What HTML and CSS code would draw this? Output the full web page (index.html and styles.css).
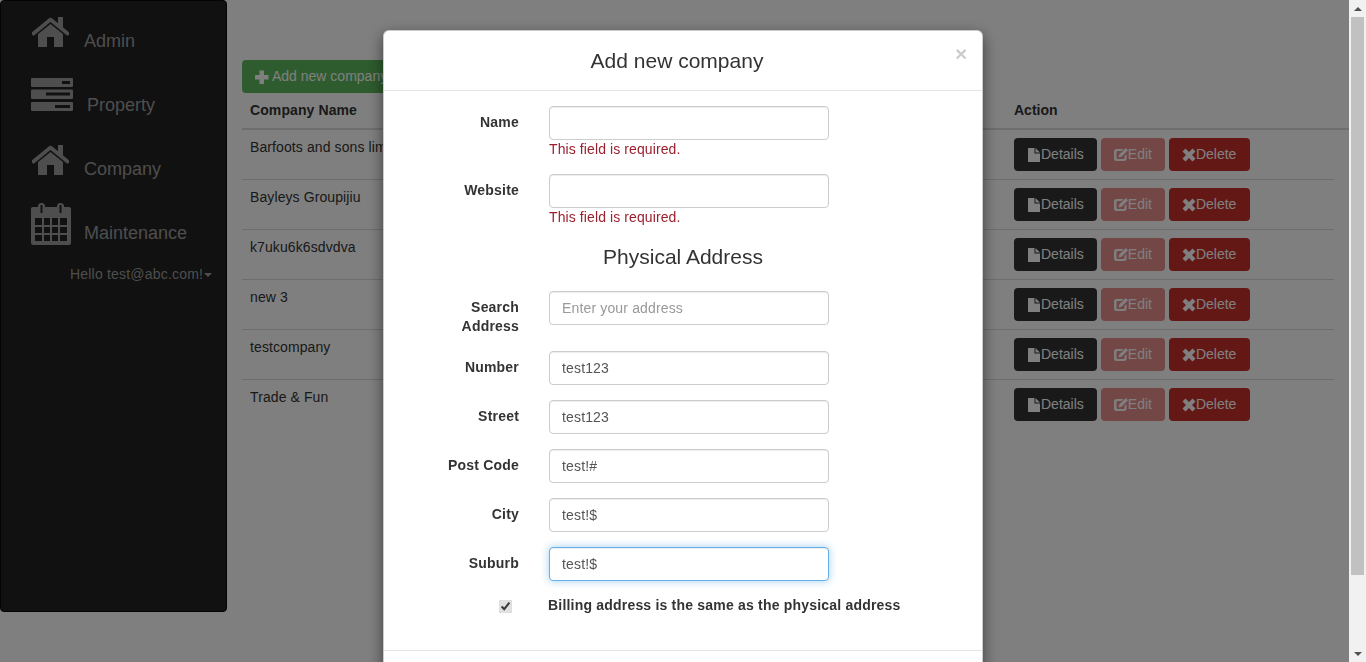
FILE: index.html
```html
<!DOCTYPE html>
<html lang="en">
<head>
<meta charset="utf-8">
<title>Add new company</title>
<link rel="stylesheet" href="styles.css">
</head>
<body>
<svg class="defs" width="0" height="0" aria-hidden="true">
  <symbol id="i-home" viewBox="0 0 37 30">
    <rect x="26" y="0" width="5" height="10"/>
    <path d="M1.5 16.5 18.5 2.5 35.5 16.5" fill="none" stroke="currentColor" stroke-width="3.6" stroke-linecap="round" stroke-linejoin="round"/>
    <path d="M18.5 7 31 17V30H22V20H15V30H6V17Z"/>
  </symbol>
  <symbol id="i-tasks" viewBox="0 0 42 33">
    <path fill-rule="evenodd" d="M1 0H41a1 1 0 0 1 1 1V8a1 1 0 0 1-1 1H1a1 1 0 0 1-1-1V1a1 1 0 0 1 1-1ZM31 3V6H39V3ZM1 11.500H41a1 1 0 0 1 1 1V20a1 1 0 0 1-1 1H1a1 1 0 0 1-1-1V12.500a1 1 0 0 1 1-1ZM15 14.500V17.500H39V14.500ZM1 24H41a1 1 0 0 1 1 1V32a1 1 0 0 1-1 1H1a1 1 0 0 1-1-1V25a1 1 0 0 1 1-1ZM24 27V30H39V27Z"/>
  </symbol>
  <symbol id="i-calendar" viewBox="0 0 40 42">
    <path fill-rule="evenodd" d="M2 4H7V2.500a3 3 0 0 1 3-2.500h1a3 3 0 0 1 3 2.500V4H26V2.500a3 3 0 0 1 3-2.500h1a3 3 0 0 1 3 2.500V4H38a2 2 0 0 1 2 2V40a2 2 0 0 1-2 2H2a2 2 0 0 1-2-2V6a2 2 0 0 1 2-2ZM9.500 2V10H11.500V2ZM28.500 2V10H30.500V2ZM4 15V22H11V15ZM13 15V22H19V15ZM21 15V22H27V15ZM29 15V22H36V15ZM4 24V30H11V24ZM13 24V30H19V24ZM21 24V30H27V24ZM29 24V30H36V24ZM4 32V38H11V32ZM13 32V38H19V32ZM21 32V38H27V32ZM29 32V38H36V32Z"/>
  </symbol>
  <symbol id="i-plus" viewBox="0 0 14 14">
    <path d="M4.500 .5H9V5H13.500V9.500H9V14H4.500V9.500H0V5H4.500Z"/>
  </symbol>
  <symbol id="i-file" viewBox="0 0 14 14">
    <path d="M1 0H7.500V5.500H13V14H1ZM8.500 0 13 4.500H8.500Z"/>
  </symbol>
  <symbol id="i-edit" viewBox="0 0 14 14">
    <path fill-rule="evenodd" d="M2.500 1H9.500L7.500 3H3.500A1 1 0 0 0 2.500 4V10A1 1 0 0 0 3.500 11H9.500A1 1 0 0 0 10.500 10V8L12.500 6V10.500A2.500 2.500 0 0 1 10 13H2.500A2.500 2.500 0 0 1 0 10.500V3.500A2.500 2.500 0 0 1 2.500 1ZM11.800 0 14 2.200 7.500 8.700 4.500 9.500 5.300 6.500Z"/>
  </symbol>
  <symbol id="i-remove" viewBox="0 0 14 14">
    <path d="M3.500 .5 7 4 10.500 .5 13.500 3.500 10 7 13.500 10.500 10.500 13.500 7 10 3.500 13.500 .5 10.500 4 7 .5 3.500Z"/>
  </symbol>
</svg>

<div class="page">
  <nav class="sidebar">
    <a class="nav-item"><svg class="icon-home"><use href="#i-home"/></svg><span>Admin</span></a>
    <a class="nav-item"><svg class="icon-tasks"><use href="#i-tasks"/></svg><span>Property</span></a>
    <a class="nav-item"><svg class="icon-home"><use href="#i-home"/></svg><span>Company</span></a>
    <a class="nav-item"><svg class="icon-calendar"><use href="#i-calendar"/></svg><span>Maintenance</span></a>
    <div class="hello">Hello test@abc.com!<span class="caret"></span></div>
  </nav>

  <main class="content">
    <a class="btn btn-add"><svg class="ico ico-plus"><use href="#i-plus"/></svg>Add new company</a>
    <div class="thead">
      <div class="col-name">Company Name</div>
      <div class="col-action">Action</div>
    </div>
    <div class="tbody">
      <div class="row">
        <div class="col-name">Barfoots and sons limited</div>
        <div class="col-action"><a class="btn btn-dark"><svg class="ico"><use href="#i-file"/></svg>Details</a><a class="btn btn-off"><svg class="ico"><use href="#i-edit"/></svg>Edit</a><a class="btn btn-danger"><svg class="ico"><use href="#i-remove"/></svg>Delete</a></div>
      </div>
      <div class="row">
        <div class="col-name">Bayleys Groupijiu</div>
        <div class="col-action"><a class="btn btn-dark"><svg class="ico"><use href="#i-file"/></svg>Details</a><a class="btn btn-off"><svg class="ico"><use href="#i-edit"/></svg>Edit</a><a class="btn btn-danger"><svg class="ico"><use href="#i-remove"/></svg>Delete</a></div>
      </div>
      <div class="row">
        <div class="col-name">k7uku6k6sdvdva</div>
        <div class="col-action"><a class="btn btn-dark"><svg class="ico"><use href="#i-file"/></svg>Details</a><a class="btn btn-off"><svg class="ico"><use href="#i-edit"/></svg>Edit</a><a class="btn btn-danger"><svg class="ico"><use href="#i-remove"/></svg>Delete</a></div>
      </div>
      <div class="row">
        <div class="col-name">new 3</div>
        <div class="col-action"><a class="btn btn-dark"><svg class="ico"><use href="#i-file"/></svg>Details</a><a class="btn btn-off"><svg class="ico"><use href="#i-edit"/></svg>Edit</a><a class="btn btn-danger"><svg class="ico"><use href="#i-remove"/></svg>Delete</a></div>
      </div>
      <div class="row">
        <div class="col-name">testcompany</div>
        <div class="col-action"><a class="btn btn-dark"><svg class="ico"><use href="#i-file"/></svg>Details</a><a class="btn btn-off"><svg class="ico"><use href="#i-edit"/></svg>Edit</a><a class="btn btn-danger"><svg class="ico"><use href="#i-remove"/></svg>Delete</a></div>
      </div>
      <div class="row">
        <div class="col-name">Trade &amp; Fun</div>
        <div class="col-action"><a class="btn btn-dark"><svg class="ico"><use href="#i-file"/></svg>Details</a><a class="btn btn-off"><svg class="ico"><use href="#i-edit"/></svg>Edit</a><a class="btn btn-danger"><svg class="ico"><use href="#i-remove"/></svg>Delete</a></div>
      </div>
    </div>
  </main>
</div>

<div class="backdrop"></div>

<div class="modal-layer">
  <section class="modal">
    <header class="modal-header">
      <h4 class="modal-title">Add new company</h4>
      <button class="close" type="button">×</button>
    </header>
    <form class="modal-body">
      <div class="field">
        <label class="field-label">Name</label>
        <div class="field-control">
          <input class="input" type="text">
          <div class="error">This field is required.</div>
        </div>
      </div>
      <div class="field">
        <label class="field-label">Website</label>
        <div class="field-control">
          <input class="input" type="text">
          <div class="error">This field is required.</div>
        </div>
      </div>
      <h3 class="section-title">Physical Address</h3>
      <div class="field">
        <label class="field-label">Search Address</label>
        <div class="field-control"><input class="input" type="text" placeholder="Enter your address"></div>
      </div>
      <div class="field">
        <label class="field-label">Number</label>
        <div class="field-control"><input class="input" type="text" value="test123"></div>
      </div>
      <div class="field">
        <label class="field-label">Street</label>
        <div class="field-control"><input class="input" type="text" value="test123"></div>
      </div>
      <div class="field">
        <label class="field-label">Post Code</label>
        <div class="field-control"><input class="input" type="text" value="test!#"></div>
      </div>
      <div class="field">
        <label class="field-label">City</label>
        <div class="field-control"><input class="input" type="text" value="test!$"></div>
      </div>
      <div class="field">
        <label class="field-label">Suburb</label>
        <div class="field-control"><input class="input input-focus" type="text" value="test!$"></div>
      </div>
      <div class="check-row">
        <div class="check-cell"><input class="check" type="checkbox" checked></div>
        <label class="check-label">Billing address is the same as the physical address</label>
      </div>
    </form>
    <footer class="modal-footer"></footer>
  </section>
</div>

<div class="scrollbar">
  <div class="arrow arrow-up"></div>
  <div class="track"><div class="thumb"></div></div>
  <div class="arrow arrow-down"></div>
</div>
</body>
</html>
```

FILE: styles.css
```css
* { box-sizing: border-box; }

html, body {
  margin: 0;
  height: 662px;
  overflow: hidden;
}

body {
  background: #fff;
  color: #333;
  font-family: "Liberation Sans", Arial, sans-serif;
  font-size: 14px;
  line-height: 19px;
}

.defs { position: absolute; }

svg { fill: currentColor; display: block; flex: none; }

.page {
  display: flex;
  align-items: flex-start;
  width: 1349px;
  height: 662px;
}

/* sidebar */
.sidebar {
  width: 227px;
  height: 612px;
  flex: none;
  background: #222;
  border: 1px solid #080808;
  border-radius: 4px;
  padding-top: 8px;
  color: #9d9d9d;
}

.nav-item {
  display: flex;
  align-items: center;
  height: 64px;
  padding-left: 30px;
  font-size: 18px;
}

.icon-home { width: 37px; height: 30px; margin: 0 15px 18px 1px; }
.icon-tasks { width: 42px; height: 33px; margin: 0 14px 21px 0; }
.icon-calendar { width: 40px; height: 42px; margin: 0 13px 18px 0; }

.hello {
  display: flex;
  align-items: center;
  padding-left: 69px;
  letter-spacing: .2px;
}

.caret {
  width: 0;
  height: 0;
  margin-left: 1px;
  border-top: 4px solid #9d9d9d;
  border-left: 4px solid transparent;
  border-right: 4px solid transparent;
}

/* content */
.content {
  flex: 1;
  min-width: 0;
  padding: 60px 0 0 15px;
}

.btn {
  display: inline-flex;
  align-items: center;
  height: 33px;
  padding: 0 13px;
  border-radius: 4px;
  color: #fff;
  white-space: nowrap;
}

.ico { width: 14px; height: 14px; }
.ico-plus { margin-right: 3px; }

.btn-add { background: #5cb85c; }
.btn-dark { background: #333; }
.btn-danger { background: #c9302c; padding-right: 14px; }
.btn-off { background: #d9534f; opacity: .65; }

.thead {
  display: flex;
  align-items: flex-start;
  height: 34px;
  margin-top: 3px;
  padding-top: 5px;
  border-bottom: 2px solid #ddd;
  font-weight: 700;
  letter-spacing: .1px;
}

.row {
  display: flex;
  height: 50px;
  margin-right: 15px;
  border-bottom: 1px solid #ddd;
  padding-top: 8px;
  letter-spacing: .1px;
}

.row:last-child { border-bottom: 0; }

.col-name {
  width: 764px;
  flex: none;
  padding-left: 8px;
}

.col-action {
  display: flex;
  gap: 4px;
  padding-left: 8px;
  letter-spacing: 0;
}

/* overlay */
.backdrop {
  position: fixed;
  inset: 0;
  background: rgba(0, 0, 0, .5);
}

.modal-layer {
  position: fixed;
  inset: 0;
  display: flex;
  justify-content: center;
  align-items: flex-start;
  padding-top: 30px;
  overflow: hidden;
}

.modal {
  width: 600px;
  flex: none;
  background: #fff;
  border: 1px solid rgba(0, 0, 0, .2);
  border-radius: 6px;
  box-shadow: 0 5px 15px rgba(0, 0, 0, .5);
}

.modal-header {
  display: flex;
  align-items: flex-start;
  height: 60px;
  padding: 15px;
  border-bottom: 1px solid #e5e5e5;
}

.modal-title {
  flex: 1;
  margin: 0;
  text-align: center;
  font-size: 21px;
  font-weight: 400;
  line-height: 30px;
}

.close {
  flex: none;
  width: 12px;
  height: 20px;
  margin-top: -2px;
  padding: 0;
  border: 0;
  background: none;
  color: #000;
  opacity: .2;
  font: 700 21px/18px "Liberation Sans", Arial, sans-serif;
}

.modal-body {
  padding: 15px 15px 35px;
}

.field {
  display: flex;
  margin-bottom: 15px;
}

.field-label {
  width: 120px;
  padding: 7px 0 0 15px;
  flex: none;
  text-align: right;
  font-weight: 700;
  letter-spacing: .2px;
}

.field-control {
  margin-left: 30px;
  width: 280px;
}

.input {
  display: block;
  width: 280px;
  height: 34px;
  padding: 6px 12px;
  border: 1px solid #ccc;
  border-radius: 4px;
  background: #fff;
  color: #555;
  font: 14px/20px "Liberation Sans", Arial, sans-serif;
  letter-spacing: .15px;
  box-shadow: inset 0 1px 1px rgba(0, 0, 0, .075);
  outline: 0;
}

.input::placeholder { color: #999; opacity: 1; }

.input-focus {
  border-color: #66afe9;
  box-shadow: inset 0 1px 1px rgba(0, 0, 0, .075), 0 0 8px rgba(102, 175, 233, .6);
}

.error { color: #9c1f2e; letter-spacing: .1px; }

.section-title {
  margin: 0 0 15px;
  height: 34px;
  text-align: center;
  font-size: 21px;
  font-weight: 400;
  line-height: 30px;
}

.check-row {
  display: flex;
  align-items: center;
  height: 19px;
}

.check-cell {
  width: 135px;
  display: flex;
  justify-content: flex-end;
  padding-right: 22px;
  flex: none;
}

.check {
  width: 13px;
  height: 13px;
  margin: 1px 0 0;
  accent-color: #e0e0e0;
}

.check-label {
  margin-left: 14px;
  font-weight: 700;
  letter-spacing: .2px;
  white-space: nowrap;
}

.modal-footer { height: 70px; border-top: 1px solid #e5e5e5; }

/* scrollbar of the modal layer */
.scrollbar {
  position: fixed;
  top: 0;
  right: 0;
  bottom: 0;
  width: 17px;
  display: flex;
  flex-direction: column;
  background: #f1f1f1;
}

.arrow {
  height: 17px;
  flex: none;
  display: flex;
  justify-content: center;
  align-items: center;
}

.arrow::before {
  content: "";
  border-left: 4px solid transparent;
  border-right: 4px solid transparent;
}

.arrow-up::before { border-bottom: 4px solid #505050; }
.arrow-down::before { border-top: 4px solid #505050; }

.track { flex: 1; padding: 0 2px; }

.thumb { height: 558px; background: #c1c1c1; }
```
